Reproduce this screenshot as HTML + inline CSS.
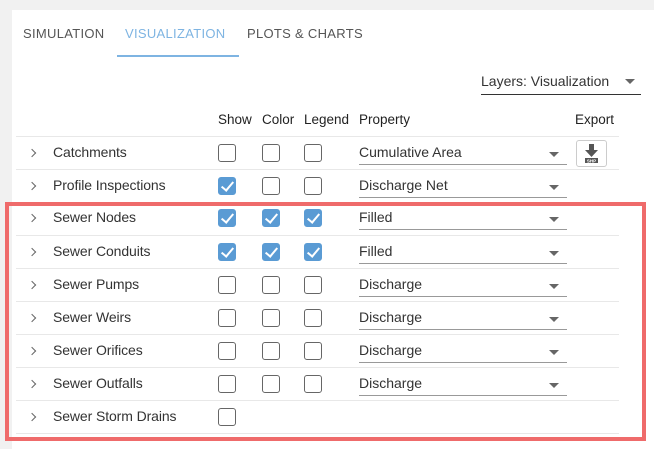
<!DOCTYPE html>
<html><head><style>
*{margin:0;padding:0;box-sizing:border-box}
body{width:654px;height:449px;background:#f1f1f1;font-family:"Liberation Sans",Roboto,sans-serif;position:relative;overflow:hidden;color:#333}
.panel{position:absolute;left:12px;top:10px;right:0;bottom:0;background:#fff}
.a{position:absolute;white-space:nowrap}
.tab{font-size:13px;letter-spacing:.3px;top:26px;color:#555}
.hd{font-size:13.5px;top:112px;color:#222}
.row{position:absolute;left:16px;width:603px;height:33px;border-top:1px solid #e8e8e8}
.cb{position:absolute;top:7px;width:18px;height:18px;border:1.3px solid #666;border-radius:3px}
.cb.on{background:#5a9bd4;border-color:#5a9bd4}
.cb.on:after{content:"";position:absolute;left:5px;top:1px;width:5px;height:10px;border:solid #fff;border-width:0 2.3px 2.3px 0;transform:rotate(40deg)}
.chev{position:absolute;left:13px;top:13px;width:6px;height:6px;border:solid #666;border-width:1.3px 1.3px 0 0;transform:rotate(45deg)}
.nm{position:absolute;left:37px;top:7px;font-size:14px;color:#333;letter-spacing:-.1px}
.dd{position:absolute;left:343px;top:3px;width:208px;height:25px;border-bottom:1px solid #999;font-size:14px;color:#333;padding-top:4px}
.dd:after{content:"";position:absolute;right:8px;top:12px;border:5px solid transparent;border-top-color:#666;border-bottom:0}
</style></head><body>
<div class="panel"></div>
<div class="a tab" style="left:23px">SIMULATION</div>
<div class="a tab" style="left:125px;color:#7eb4e2">VISUALIZATION</div>
<div class="a tab" style="left:247px">PLOTS &amp; CHARTS</div>
<div class="a" style="left:117px;top:55px;width:122px;height:2px;background:#7eb4e2"></div>
<div class="a" style="left:481px;top:73px;font-size:14px;color:#333">Layers: Visualization</div>
<div class="a" style="left:625px;top:79px;border:5px solid transparent;border-top-color:#666;border-bottom:0"></div>
<div class="a" style="left:481px;top:94px;width:160px;height:1px;background:#333"></div>
<div class="a hd" style="left:218px">Show</div>
<div class="a hd" style="left:262px">Color</div>
<div class="a hd" style="left:304px">Legend</div>
<div class="a hd" style="left:359px">Property</div>
<div class="a hd" style="left:575px">Export</div>

<div class="row" style="top:136px"><div class="chev"></div><div class="nm">Catchments</div><div class="cb" style="left:202px"></div><div class="cb" style="left:246px"></div><div class="cb" style="left:288px"></div><div class="dd">Cumulative Area</div>
<div style="position:absolute;left:560px;top:3px;width:31px;height:27px;border:1px solid #ccc;border-radius:3px;background:#fff">
<svg width="29" height="25" viewBox="0 0 29 25"><rect x="12" y="3" width="5" height="7" fill="#555"/><path d="M8 9h13l-6.5 7z" fill="#555"/><rect x="8" y="17" width="13" height="5" fill="#555"/><text x="14.5" y="21.3" font-size="4.5" fill="#fff" text-anchor="middle" font-family="Liberation Sans" font-weight="bold">SHP</text></svg></div></div>
<div class="row" style="top:169px"><div class="chev"></div><div class="nm">Profile Inspections</div><div class="cb on" style="left:202px"></div><div class="cb" style="left:246px"></div><div class="cb" style="left:288px"></div><div class="dd">Discharge Net</div></div>
<div class="row" style="top:202px;border-top:0"><div class="chev"></div><div class="nm">Sewer Nodes</div><div class="cb on" style="left:202px"></div><div class="cb on" style="left:246px"></div><div class="cb on" style="left:288px"></div><div class="dd">Filled</div></div>
<div class="row" style="top:235px"><div class="chev"></div><div class="nm">Sewer Conduits</div><div class="cb on" style="left:202px"></div><div class="cb on" style="left:246px"></div><div class="cb on" style="left:288px"></div><div class="dd">Filled</div></div>
<div class="row" style="top:268px"><div class="chev"></div><div class="nm">Sewer Pumps</div><div class="cb" style="left:202px"></div><div class="cb" style="left:246px"></div><div class="cb" style="left:288px"></div><div class="dd">Discharge</div></div>
<div class="row" style="top:301px"><div class="chev"></div><div class="nm">Sewer Weirs</div><div class="cb" style="left:202px"></div><div class="cb" style="left:246px"></div><div class="cb" style="left:288px"></div><div class="dd">Discharge</div></div>
<div class="row" style="top:334px"><div class="chev"></div><div class="nm">Sewer Orifices</div><div class="cb" style="left:202px"></div><div class="cb" style="left:246px"></div><div class="cb" style="left:288px"></div><div class="dd">Discharge</div></div>
<div class="row" style="top:367px"><div class="chev"></div><div class="nm">Sewer Outfalls</div><div class="cb" style="left:202px"></div><div class="cb" style="left:246px"></div><div class="cb" style="left:288px"></div><div class="dd">Discharge</div></div>
<div class="row" style="top:400px"><div class="chev"></div><div class="nm">Sewer Storm Drains</div><div class="cb" style="left:202px"></div></div>
<div class="row" style="top:433px;height:1px"></div>
<div class="a" style="left:5px;top:202px;width:641px;height:239px;border:4px solid #ef6b6b"></div>
</body></html>
